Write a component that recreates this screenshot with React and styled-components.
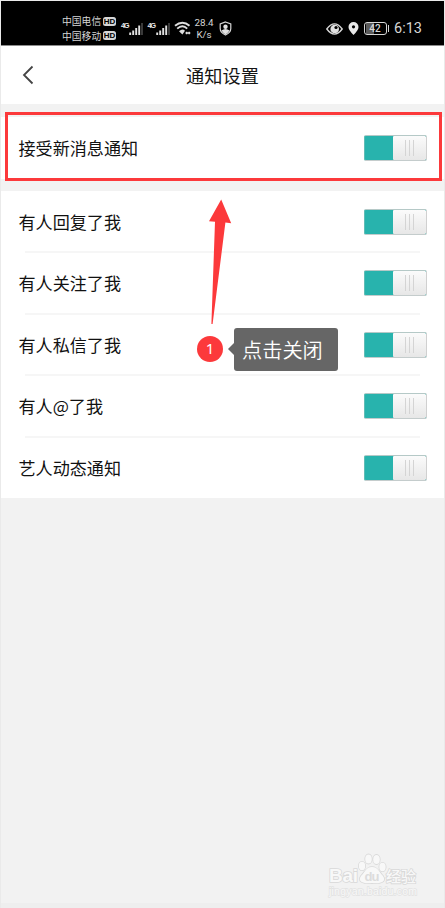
import React from 'react';
import styled, { createGlobalStyle } from 'styled-components';

const Global = createGlobalStyle`
  *, *::before, *::after { box-sizing: border-box; }
  body { margin: 0; background: #f2f2f2; font-family: "Noto Sans CJK SC", sans-serif; }
`;

const Screen = styled.div`
  position: relative;
  display: flex;
  flex-direction: column;
  width: 445px;
  height: 908px;
  overflow: hidden;
  background: #f2f2f2;
  border: 1px solid #eaeaea;
  border-bottom: 0;
`;

const StatusBar = styled.div`
  flex: none;
  display: flex;
  align-items: center;
  height: 45px;
  padding: 11px 20px 0 61px;
  background: #000;
  border-bottom: 1px solid #8c8c8c;
  color: #d6d6d6;
  svg { display: block; flex: none; }
`;

const Carriers = styled.div`
  display: grid;
  row-gap: 0;
  width: 59px;
`;

const Carrier = styled.div`
  display: flex;
  align-items: center;
  gap: 2px;
  height: 14.5px;
  font-size: 9.8px;
  line-height: 14px;
  white-space: nowrap;
`;

const HdBadge = styled.span`
  width: 12.5px;
  height: 9px;
  border-radius: 2.5px;
  background: #d6d6d6;
  color: #000;
  font: 700 8px/9px "Liberation Sans", sans-serif;
  letter-spacing: -0.2px;
  text-align: center;
`;

const Signal = styled.div`
  display: flex;
  align-items: flex-start;
  width: 26.5px;
  height: 14px;
`;

const Network = styled.span`
  width: 8px;
  font: 700 7.5px/7px "Liberation Sans", sans-serif;
  letter-spacing: -1.4px;
  color: #e8e8e8;
`;

const Speed = styled.div`
  width: 20px;
  margin: 0 5px 0 3px;
  font: 9.8px/12px Roboto, sans-serif;
  text-align: center;
  white-space: nowrap;
`;

const StatusRight = styled.div`
  display: flex;
  align-items: center;
  margin-left: auto;
  gap: 5px;
`;

const Battery = styled.div`
  display: flex;
  align-items: center;
  gap: 1px;
  margin-left: 0;
`;

const BatteryBody = styled.div`
  width: 23px;
  height: 13px;
  border: 1px solid #d6d6d6;
  border-radius: 3px;
  background: linear-gradient(90deg, #000 1px, #5c5c5c 1px 45%, #000 45%);
  font: 500 10px/11.5px Roboto, sans-serif;
  text-align: center;
`;

const BatteryTip = styled.div`
  width: 1.5px;
  height: 7px;
  background: #d6d6d6;
`;

const Time = styled.div`
  width: 30px;
  font: 14.5px/16px Roboto, sans-serif;
  white-space: nowrap;
`;

const Header = styled.header`
  flex: none;
  display: grid;
  grid-template-columns: 54px 1fr 54px;
  align-items: center;
  height: 58px;
  background: #fff;
  svg { display: block; margin-left: 21px; }
`;

const Title = styled.h1`
  margin: 0;
  color: #151515;
  font-size: 18.2px;
  font-weight: 400;
  line-height: 26px;
  text-align: center;
`;

const Group = styled.section`
  flex: none;
  margin-top: ${(p) => p.$gap}px;
  background: #fff;
`;

const Row = styled.div`
  display: flex;
  align-items: center;
  justify-content: space-between;
  height: 61.5px;
  padding: 0 17px;
`;

const Divider = styled.div`
  height: 2px;
  margin: -1px 24px;
  background: #f6f6f6;
`;

const Label = styled.span`
  padding-left: 0.5px;
  color: #111;
  font-size: 17.1px;
  line-height: 26px;
`;

const Switch = styled.button`
  display: flex;
  width: 63px;
  height: 26px;
  padding: 0;
  border: 1px solid #cbcbcb;
  border-color: #b5c9c7 #d0d0d0 #c4cccc #5fbcb6;
  border-radius: 2px;
  background: #28b3ad;
  overflow: hidden;
`;

const Knob = styled.span`
  display: flex;
  align-items: center;
  justify-content: center;
  gap: 3px;
  width: 33px;
  height: 24px;
  margin-left: auto;
  border-radius: 1px;
  background: linear-gradient(#fbfbfb, #e7e7e7);
`;

const Grip = styled.i`
  width: 1px;
  height: 16px;
  background: #d4d4d4;
`;

const Highlight = styled.div`
  position: absolute;
  left: 4px;
  top: 111px;
  width: 437px;
  height: 69px;
  border: 3px solid #fc393b;
`;

const Arrow = styled.svg`
  position: absolute;
  left: 207px;
  top: 197px;
`;

const Step = styled.div`
  position: absolute;
  left: 196px;
  top: 335px;
  width: 26px;
  height: 26px;
  border-radius: 50%;
  background: #fc393b;
  color: #fff;
  font: 15px/25px "Noto Sans", sans-serif;
  text-align: center;
`;

const Tooltip = styled.div`
  position: absolute;
  left: 233px;
  top: 327px;
  width: 104px;
  height: 43px;
  padding-left: 8px;
  border-radius: 3px;
  background: #666;
  color: #fff;
  font-size: 20.2px;
  font-weight: 350;
  line-height: 43px;
  white-space: nowrap;
  &::before {
    content: "";
    position: absolute;
    left: -6px;
    top: 15px;
    border: 6px solid transparent;
    border-left: 0;
    border-right-color: #666;
  }
`;

const Watermark = styled.svg`
  position: absolute;
  left: 324px;
  top: 850px;
`;

const BottomStrip = styled.div`
  flex: none;
  height: 5px;
  margin-top: auto;
  background: #eeeeee;
`;

const SignalIcon = () => (
  <Signal>
    <Network>4G</Network>
    <svg width="14" height="14" viewBox="0 0 14 14">
      <path d="M1.2 10.5V13M4.2 8.5V13M7.2 6V13M10.2 3.5V13" stroke="#e2e2e2" strokeWidth="1.9" />
      <path d="M13 1V13" stroke="#484848" strokeWidth="1.6" />
    </svg>
  </Signal>
);

const WifiIcon = () => (
  <svg width="17" height="15" viewBox="0 0 17 15" fill="none" stroke="#dedede">
    <path d="M1 4.8Q8.5-1.4 15.5 4.8M3.2 7.6Q8.5 3 13.2 7.6" strokeWidth="1.9" />
    <path d="M5 10.2Q8.5 7 11 9.8L8.4 13.5Z" fill="#dedede" stroke="none" />
    <path d="M11.5 12H16.3M12.6 10.8V13.2M15.2 10.8V13.2" strokeWidth="1.3" />
  </svg>
);

const ShieldIcon = () => (
  <svg width="13" height="15" viewBox="0 0 13 15">
    <path d="M6.5 1L11.8 3V7.5Q11.8 11.5 6.5 14Q1.2 11.5 1.2 7.5V3Z" fill="none" stroke="#d6d6d6" strokeWidth="1.2" />
    <circle cx="6.5" cy="5.7" r="2.2" fill="#e2e2e2" />
    <path d="M2.4 9.6Q6.5 6.4 10.6 9.6Q9 12.2 6.5 13.4Q4 12.2 2.4 9.6Z" fill="#e2e2e2" />
  </svg>
);

const EyeIcon = () => (
  <svg width="17" height="12" viewBox="0 0 17 12">
    <path d="M.8 6Q8.5-4.2 16.2 6Q8.5 16.2 .8 6Z" fill="none" stroke="#d6d6d6" strokeWidth="1.4" />
    <circle cx="8.7" cy="6" r="4.3" fill="#e2e2e2" />
    <circle cx="10" cy="4.5" r="1.6" fill="#000" />
  </svg>
);

const PinIcon = () => (
  <svg width="11" height="13" viewBox="0 0 11 13">
    <path d="M5.5 0A5 5 0 0 1 10.5 5Q10.5 8 5.5 13Q.5 8 .5 5A5 5 0 0 1 5.5 0Z" fill="#e8e8e8" />
    <circle cx="5.5" cy="4.8" r="1.6" fill="#000" />
  </svg>
);

const Setting = ({ label }) => (
  <Row>
    <Label>{label}</Label>
    <Switch role="switch" aria-checked="true" aria-label={label}>
      <Knob><Grip /><Grip /><Grip /></Knob>
    </Switch>
  </Row>
);

const settings = ['有人回复了我', '有人关注了我', '有人私信了我', '有人@了我', '艺人动态通知'];

export default function App() {
  return (
    <>
      <Global />
      <Screen>
        <StatusBar>
          <Carriers>
            <Carrier>中国电信<HdBadge>HD</HdBadge></Carrier>
            <Carrier>中国移动<HdBadge>HD</HdBadge></Carrier>
          </Carriers>
          <SignalIcon />
          <SignalIcon />
          <WifiIcon />
          <Speed>28.4<br />K/s</Speed>
          <ShieldIcon />
          <StatusRight>
            <EyeIcon />
            <PinIcon />
            <Battery><BatteryBody>42</BatteryBody><BatteryTip /></Battery>
            <Time>6:13</Time>
          </StatusRight>
        </StatusBar>
        <Header>
          <svg width="13" height="20" viewBox="0 0 13 20" fill="none" stroke="#444" strokeWidth="1.8">
            <path d="M10.5 1.5L2 10L10.5 18.5" />
          </svg>
          <Title>通知设置</Title>
        </Header>
        <Group $gap={13}><Setting label="接受新消息通知" /></Group>
        <Group $gap={12.4}>
          {settings.map((label, i) => (
            <React.Fragment key={label}>
              {i > 0 && <Divider />}
              <Setting label={label} />
            </React.Fragment>
          ))}
        </Group>
        <BottomStrip />
        <Highlight />
        <Arrow width="26" height="128" viewBox="0 0 26 128">
          <path d="M13.2 1.5L23.2 25.2L17.4 24.4L4.6 126H3.4L7 23.8L1 23.3Z" fill="#fc393b" />
        </Arrow>
        <Step>1</Step>
        <Tooltip>点击关闭</Tooltip>
        <Watermark width="96" height="50" viewBox="0 0 96 50">
          <g fill="#f8f8f8" stroke="#d9d9d9" strokeWidth="1.6" paintOrder="stroke">
            <text x="4" y="31" fontFamily="Liberation Sans, sans-serif" fontWeight="700" fontSize="19" textLength="29">Bai</text>
            <path d="M47 16C53 16 54 21 58 25C62 31 55 33 47 32C39 33 32 31 36 25C40 21 41 16 47 16Z" />
            <ellipse cx="37" cy="15" rx="3.2" ry="4.2" />
            <ellipse cx="43.5" cy="8" rx="3.3" ry="4.6" />
            <ellipse cx="51.5" cy="8.5" rx="3.3" ry="4.6" />
            <ellipse cx="57.5" cy="16" rx="3.2" ry="4.2" />
            <text x="39.5" y="30" fontFamily="Liberation Sans, sans-serif" fontWeight="700" fontSize="13" textLength="15" fill="#dcdcdc" stroke="none">du</text>
            <text x="61" y="30.5" fontFamily="Noto Sans CJK SC, sans-serif" fontWeight="500" fontSize="15" textLength="30">经验</text>
          </g>
          <text x="4" y="43.5" fontFamily="Liberation Sans, sans-serif" fontWeight="400" fontSize="10.5" textLength="88" fill="#f8f8f8" stroke="#e2e2e2" strokeWidth="1.4" paintOrder="stroke">jingyan.baidu.com</text>
        </Watermark>
      </Screen>
    </>
  );
}
